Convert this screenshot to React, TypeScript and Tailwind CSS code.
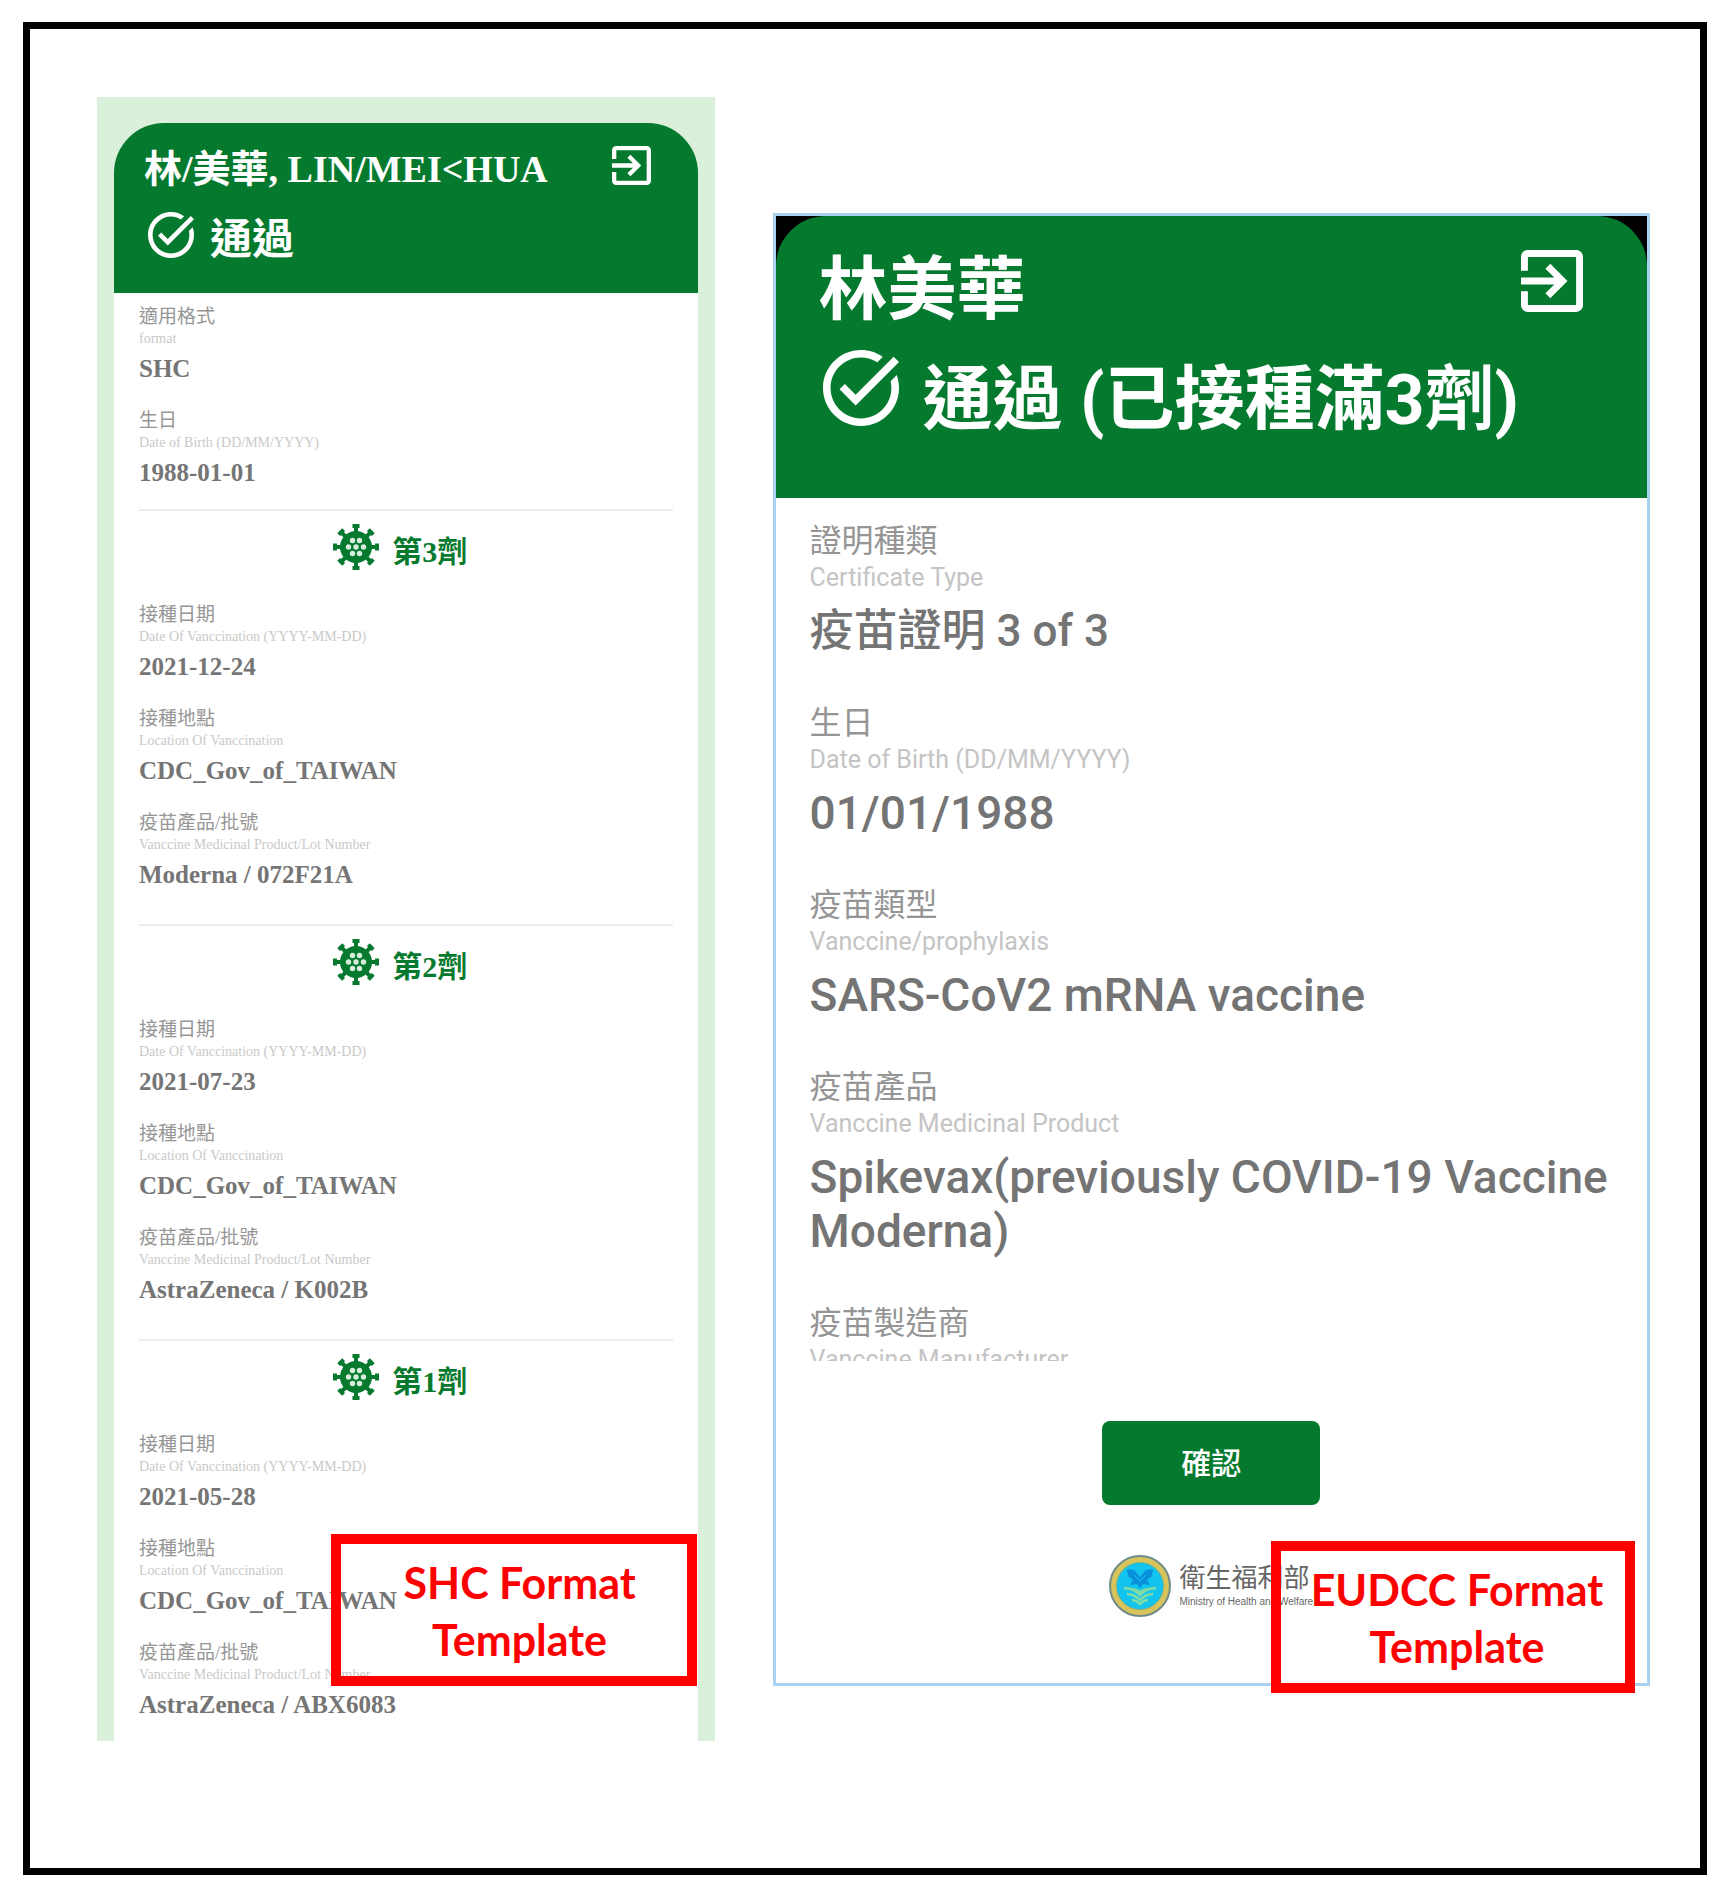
import type { ReactNode } from 'react'

type FieldData = { label: string; sub: string; value?: string; valueSize?: string }

const SERIF = "font-['Liberation_Serif','Noto_Sans_CJK_TC',serif]"
const SANS  = "font-['Roboto','Noto_Sans_CJK_TC',sans-serif]"

const holder: FieldData[] = [
  { label: '適用格式', sub: 'format', value: 'SHC' },
  { label: '生日', sub: 'Date of Birth (DD/MM/YYYY)', value: '1988-01-01' },
]

const doses = [
  { n: 3, date: '2021-12-24', place: 'CDC_Gov_of_TAIWAN', product: 'Moderna / 072F21A' },
  { n: 2, date: '2021-07-23', place: 'CDC_Gov_of_TAIWAN', product: 'AstraZeneca / K002B' },
  { n: 1, date: '2021-05-28', place: 'CDC_Gov_of_TAIWAN', product: 'AstraZeneca / ABX6083' },
]

const certificate: FieldData[] = [
  { label: '證明種類', sub: 'Certificate Type', value: '疫苗證明 3 of 3', valueSize: 'text-[44px]' },
  { label: '生日', sub: 'Date of Birth (DD/MM/YYYY)', value: '01/01/1988' },
  { label: '疫苗類型', sub: 'Vanccine/prophylaxis', value: 'SARS-CoV2 mRNA vaccine' },
  { label: '疫苗產品', sub: 'Vanccine Medicinal Product', value: 'Spikevax(previously COVID-19 Vaccine Moderna)' },
  { label: '疫苗製造商', sub: 'Vanccine Manufacturer' },
]

function ExitIcon({ className }: { className: string }) {
  return (
    <svg className={className} viewBox="3 3 18 18" fill="currentColor" aria-hidden="true">
      <path d="M10.09 15.59L11.5 17l5-5-5-5-1.41 1.41L12.67 11H3v2h9.67l-2.58 2.59zM19 3H5c-1.11 0-2 .9-2 2v4h2V5h14v14H5v-4H3v4c0 1.1.89 2 2 2h14c1.1 0 2-.9 2-2V5c0-1.1-.9-2-2-2z" />
    </svg>
  )
}

function PassIcon({ className }: { className: string }) {
  return (
    <svg className={className} viewBox="2 2 20 20" fill="currentColor" aria-hidden="true">
      <path d="M22 5.18L10.59 16.6l-4.24-4.24 1.41-1.41 2.83 2.83 10-10L22 5.18zM19.79 10.22c.13.57.21 1.17.21 1.78 0 4.42-3.58 8-8 8s-8-3.58-8-8 3.58-8 8-8c1.58 0 3.04.46 4.28 1.25l1.44-1.44C16.1 2.67 14.13 2 12 2 6.48 2 2 6.48 2 12s4.48 10 10 10 10-4.48 10-10c0-1.19-.22-2.33-.6-3.39l-1.61 1.61z" />
    </svg>
  )
}

function VirusIcon() {
  const dots = [[-3.5, -6.5], [3.5, -6.5], [-7.5, 0], [0, 0], [7.5, 0], [-3.5, 6.5], [3.5, 6.5]]
  return (
    <svg className="size-12 shrink-0" viewBox="-24 -24 48 48" aria-hidden="true">
      <g stroke="#057a2e" strokeWidth="4">
        {[0, 45, 90, 135, 180, 225, 270, 315].map(a => (
          <path key={a} d="M0 -12V-23M-3.5 -21H3.5" transform={`rotate(${a})`} />
        ))}
      </g>
      <circle r="16" fill="#057a2e" />
      {dots.map(([x, y]) => <circle key={`${x},${y}`} cx={x} cy={y} r="2.7" fill="#d8ecdb" />)}
    </svg>
  )
}

function MinistryEmblem() {
  return (
    <svg className="size-[62px] shrink-0" viewBox="0 0 62 62" aria-hidden="true">
      <circle cx="31" cy="31" r="30" fill="#d9c45c" stroke="#6f8c8c" strokeWidth="2" />
      <circle cx="31" cy="31" r="23.5" fill="#12c4ee" stroke="#7fae86" strokeWidth="1" />
      <path d="M18 14l7 1 6 7 6-7 7-1-1 7-5 4 3 5-7-1-3 4-3-4-7 1 3-5-5-4z" fill="#0a8fdb" />
      <path d="M31 17v5M25 20l6 6 6-6" stroke="#12c4ee" strokeWidth="1" fill="none" />
      <path d="M15 33c6 0 11 2 16 7 5-5 10-7 16-7M18 39c5 0 9 2 13 6 4-4 8-6 13-6M23 45c3 0 6 2 8 4 2-2 5-4 8-4M24 34l7 3 7-3" stroke="#7fdca6" strokeWidth="2.6" fill="none" />
    </svg>
  )
}

function SmallField({ label, sub, value }: FieldData) {
  return (
    <div>
      <dt>
        <span className="block text-[19px] leading-6 text-[#969696]">{label}</span>
        <span className="block text-sm leading-5 text-[#c9c9c9]">{sub}</span>
      </dt>
      <dd className="text-[25px] leading-10 font-bold text-[#757575]">{value}</dd>
    </div>
  )
}

function LargeField({ label, sub, value, valueSize = 'text-[46px]' }: FieldData) {
  return (
    <div>
      <dt>
        <span className="block text-[32px] leading-[38px] text-[#959595]">{label}</span>
        <span className="block text-[25px] leading-9 text-[#c4c4c4]">{sub}</span>
      </dt>
      {value && <dd className={`mt-2 leading-[54px] font-medium text-[#747474] ${valueSize}`}>{value}</dd>}
    </div>
  )
}

function Callout({ children, className }: { children: ReactNode; className: string }) {
  return (
    <div className={`absolute border-10 border-[#ff0000] pt-2.5 pb-2 text-center font-['Lato',sans-serif] text-[43px] leading-[57px] font-bold whitespace-nowrap text-[#ff0000] ${className}`}>
      {children}
    </div>
  )
}

function ShcCard() {
  return (
    <section className={`relative bg-[#daf0da] px-[17px] pt-[26px] ${SERIF}`}>
      <header className="rounded-t-[50px] bg-[#057a2e] pt-5 pr-[47px] pb-[23px] pl-[30px] text-white">
        <div className="flex items-center justify-between">
          <h1 className="text-[38px] leading-[52px] font-bold whitespace-nowrap">林/美華, LIN/MEI&lt;HUA</h1>
          <button type="button" aria-label="Exit" className="mb-2"><ExitIcon className="size-[39px]" /></button>
        </div>
        <div className="flex items-center gap-4 pt-[15px] pl-1">
          <PassIcon className="mb-2.5 size-[46px]" />
          <p className="text-[42px] leading-[60px] font-bold">通過</p>
        </div>
      </header>
      <div className="bg-white px-[25px] pt-3">
        <dl className="space-y-5 pb-4">
          {holder.map(f => <SmallField key={f.label} {...f} />)}
        </dl>
        {doses.map(d => (
          <section key={d.n} className="border-t-2 border-[#ececec] pb-[29px] last:pb-4">
            <div className="mb-8 flex items-end justify-center gap-3 pt-3 pr-3 text-[#057a2e]">
              <VirusIcon />
              <h2 className="text-[30px] leading-[38px] font-bold">第{d.n}劑</h2>
            </div>
            <dl className="space-y-5">
              <SmallField label="接種日期" sub="Date Of Vanccination (YYYY-MM-DD)" value={d.date} />
              <SmallField label="接種地點" sub="Location Of Vanccination" value={d.place} />
              <SmallField label="疫苗產品/批號" sub="Vanccine Medicinal Product/Lot Number" value={d.product} />
            </dl>
          </section>
        ))}
      </div>
      <Callout className="right-[18px] bottom-[55px] w-[366px] pl-3">
        SHC Format<br />Template
      </Callout>
    </section>
  )
}

function EudccCard() {
  return (
    <section className={`relative border-3 border-[#a9d2f0] bg-white ${SANS}`}>
      <div className="bg-black">
        <header className="rounded-t-[50px] bg-[#057a2e] pt-6 pr-16 pb-12 pl-[43px] text-white">
          <div className="flex items-center justify-between">
            <h1 className="text-[69px] leading-[102px] font-bold">林美華</h1>
            <button type="button" aria-label="Exit" className="mb-5"><ExitIcon className="size-[62px]" /></button>
          </div>
          <div className="flex items-start gap-6 pt-1 pl-1">
            <PassIcon className="mt-1 size-[76px] shrink-0" />
            <p className="pt-1 text-[70px] leading-[100px] font-bold whitespace-nowrap">通過 (已接種滿3劑)</p>
          </div>
        </header>
      </div>
      <dl className="h-[863px] space-y-[46px] overflow-hidden pt-6 pr-6 pl-[34px]">
        {certificate.map(f => <LargeField key={f.label} {...f} />)}
      </dl>
      <div className="flex flex-col items-center pt-[60px] pb-[66px]">
        <button type="button" className="h-[84px] w-[218px] rounded-lg bg-[#057a2e] text-[30px] font-medium text-white">確認</button>
        <div className="mt-[50px] flex items-center gap-2">
          <MinistryEmblem />
          <div className="text-[#666]">
            <p className="text-[26px] leading-8">衛生福利部</p>
            <p className="font-['Liberation_Sans',sans-serif] text-[10px] leading-4">Ministry of Health and Welfare</p>
          </div>
        </div>
      </div>
      <Callout className="right-3 -bottom-2.5 w-[364px] pl-2">
        EUDCC Format<br />Template
      </Callout>
    </section>
  )
}

export default function App() {
  return (
    <div className="flex min-h-screen bg-white px-[23px] pt-[22px] pb-[21px]">
      <main className="grid flex-1 grid-cols-[618fr_878fr] items-start gap-[58px] border-7 border-black pt-[68px] pr-[50px] pb-16 pl-[67px]">
        <ShcCard />
        <div className="pt-[116px]">
          <EudccCard />
        </div>
      </main>
    </div>
  )
}
